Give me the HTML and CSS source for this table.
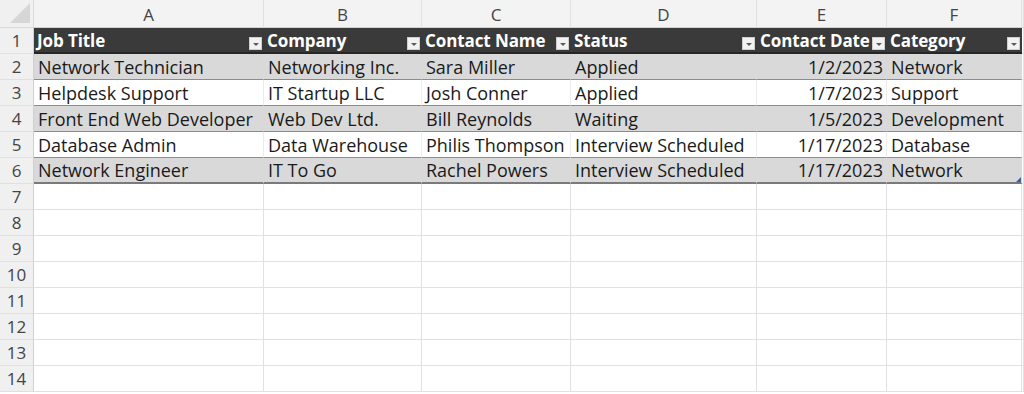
FILE: index.html
```html
<!DOCTYPE html>
<html>
<head>
<meta charset="utf-8">
<link rel="stylesheet" href="styles.css">
</head>
<body>
<div class="sheet">
  <div class="corner"><span class="tri"></span></div>
  <div class="colh">A</div><div class="colh">B</div><div class="colh">C</div><div class="colh">D</div><div class="colh">E</div><div class="colh">F</div><div class="colh"></div>

  <div class="rowh">1</div>
  <div class="th">Job Title<span class="fb"></span></div>
  <div class="th">Company<span class="fb"></span></div>
  <div class="th">Contact Name<span class="fb"></span></div>
  <div class="th">Status<span class="fb"></span></div>
  <div class="th">Contact Date<span class="fb"></span></div>
  <div class="th">Category<span class="fb"></span></div>
  <div class="cell"></div>

  <div class="rowh">2</div>
  <div class="td band">Network Technician</div>
  <div class="td band">Networking Inc.</div>
  <div class="td band">Sara Miller</div>
  <div class="td band">Applied</div>
  <div class="td band num">1/2/2023</div>
  <div class="td band">Network</div>
  <div class="cell"></div>

  <div class="rowh">3</div>
  <div class="td">Helpdesk Support</div>
  <div class="td">IT Startup LLC</div>
  <div class="td">Josh Conner</div>
  <div class="td">Applied</div>
  <div class="td num">1/7/2023</div>
  <div class="td">Support</div>
  <div class="cell"></div>

  <div class="rowh">4</div>
  <div class="td band">Front End Web Developer</div>
  <div class="td band">Web Dev Ltd.</div>
  <div class="td band">Bill Reynolds</div>
  <div class="td band">Waiting</div>
  <div class="td band num">1/5/2023</div>
  <div class="td band">Development</div>
  <div class="cell"></div>

  <div class="rowh">5</div>
  <div class="td">Database Admin</div>
  <div class="td">Data Warehouse</div>
  <div class="td">Philis Thompson</div>
  <div class="td">Interview Scheduled</div>
  <div class="td num">1/17/2023</div>
  <div class="td">Database</div>
  <div class="cell"></div>

  <div class="rowh">6</div>
  <div class="td band last">Network Engineer</div>
  <div class="td band last">IT To Go</div>
  <div class="td band last">Rachel Powers</div>
  <div class="td band last">Interview Scheduled</div>
  <div class="td band last num">1/17/2023</div>
  <div class="td band last endcell">Network<span class="handle"></span></div>
  <div class="cell"></div>

  <div class="rowh">7</div><div class="cell"></div><div class="cell"></div><div class="cell"></div><div class="cell"></div><div class="cell"></div><div class="cell"></div><div class="cell"></div>
  <div class="rowh">8</div><div class="cell"></div><div class="cell"></div><div class="cell"></div><div class="cell"></div><div class="cell"></div><div class="cell"></div><div class="cell"></div>
  <div class="rowh">9</div><div class="cell"></div><div class="cell"></div><div class="cell"></div><div class="cell"></div><div class="cell"></div><div class="cell"></div><div class="cell"></div>
  <div class="rowh">10</div><div class="cell"></div><div class="cell"></div><div class="cell"></div><div class="cell"></div><div class="cell"></div><div class="cell"></div><div class="cell"></div>
  <div class="rowh">11</div><div class="cell"></div><div class="cell"></div><div class="cell"></div><div class="cell"></div><div class="cell"></div><div class="cell"></div><div class="cell"></div>
  <div class="rowh">12</div><div class="cell"></div><div class="cell"></div><div class="cell"></div><div class="cell"></div><div class="cell"></div><div class="cell"></div><div class="cell"></div>
  <div class="rowh">13</div><div class="cell"></div><div class="cell"></div><div class="cell"></div><div class="cell"></div><div class="cell"></div><div class="cell"></div><div class="cell"></div>
  <div class="rowh">14</div><div class="cell"></div><div class="cell"></div><div class="cell"></div><div class="cell"></div><div class="cell"></div><div class="cell"></div><div class="cell"></div>
</div>
</body>
</html>
```
FILE: styles.css
```css
* { box-sizing: border-box; }
html, body { margin: 0; padding: 0; background: #ffffff; }
body { width: 1024px; height: 394px; overflow: hidden; font-family: "Open Sans", "Noto Sans", sans-serif; }

.sheet {
  display: grid;
  grid-template-columns: 34px 230px 158px 149px 186px 130px 135px 2px;
  grid-template-rows: 28px repeat(14, 26px);
}

.corner {
  background: #f0f0f0;
  border-right: 1px solid #dadada;
  border-bottom: 1px solid #dadada;
  position: relative;
}
.corner .tri {
  position: absolute;
  right: 3px;
  bottom: 4px;
  width: 0; height: 0;
  border-left: 20px solid transparent;
  border-bottom: 20px solid #d6d6d6;
}

.colh {
  background: #f3f3f3;
  border-right: 1px solid #e0e0e0;
  border-bottom: 1px solid #d0d0d0;
  color: #444444;
  font-size: 17px;
  display: flex;
  align-items: center;
  justify-content: center;
  padding-top: 2px;
}

.rowh {
  background: #f0f0f0;
  border-right: 1px solid #d0d0d0;
  border-bottom: 1px solid #e0e0e0;
  color: #444444;
  font-size: 17px;
  display: flex;
  align-items: center;
  justify-content: center;
}

.cell {
  border-right: 1px solid #e1e1e1;
  border-bottom: 1px solid #e1e1e1;
}

.th {
  background: #3a3a3a;
  color: #ffffff;
  font-weight: 700;
  font-size: 17px;
  border-bottom: 2px solid #262626;
  padding-left: 3px;
  display: flex;
  align-items: center;
  position: relative;
  white-space: nowrap;
  letter-spacing: -0.1px;
}
.fb {
  position: absolute;
  right: 2px;
  top: 9px;
  width: 13px;
  height: 13px;
  background: #f2f2f2;
  border: 1px solid #cfcfcf;
}
.fb::after {
  content: "";
  position: absolute;
  left: 3px;
  top: 5px;
  width: 0; height: 0;
  border-left: 3px solid transparent;
  border-right: 3px solid transparent;
  border-top: 3px solid #5a5a5a;
}

.td {
  background: #ffffff;
  color: #1a1a1a;
  font-size: 18px;
  border-bottom: 1px solid #8c8c8c;
  border-right: 1px solid #ececec;
  padding-left: 4px;
  padding-right: 3px;
  display: flex;
  align-items: center;
  white-space: nowrap;
}
.td.band { background: #d9d9d9; border-right-color: #d9d9d9; }
.td.num { justify-content: flex-end; }
.td.last { border-bottom: 2px solid #7a7a7a; }
.endcell { position: relative; }
.handle {
  position: absolute;
  right: 0;
  bottom: 0;
  width: 0; height: 0;
  border-left: 5px solid transparent;
  border-bottom: 5px solid #3b5ea8;
}
```
